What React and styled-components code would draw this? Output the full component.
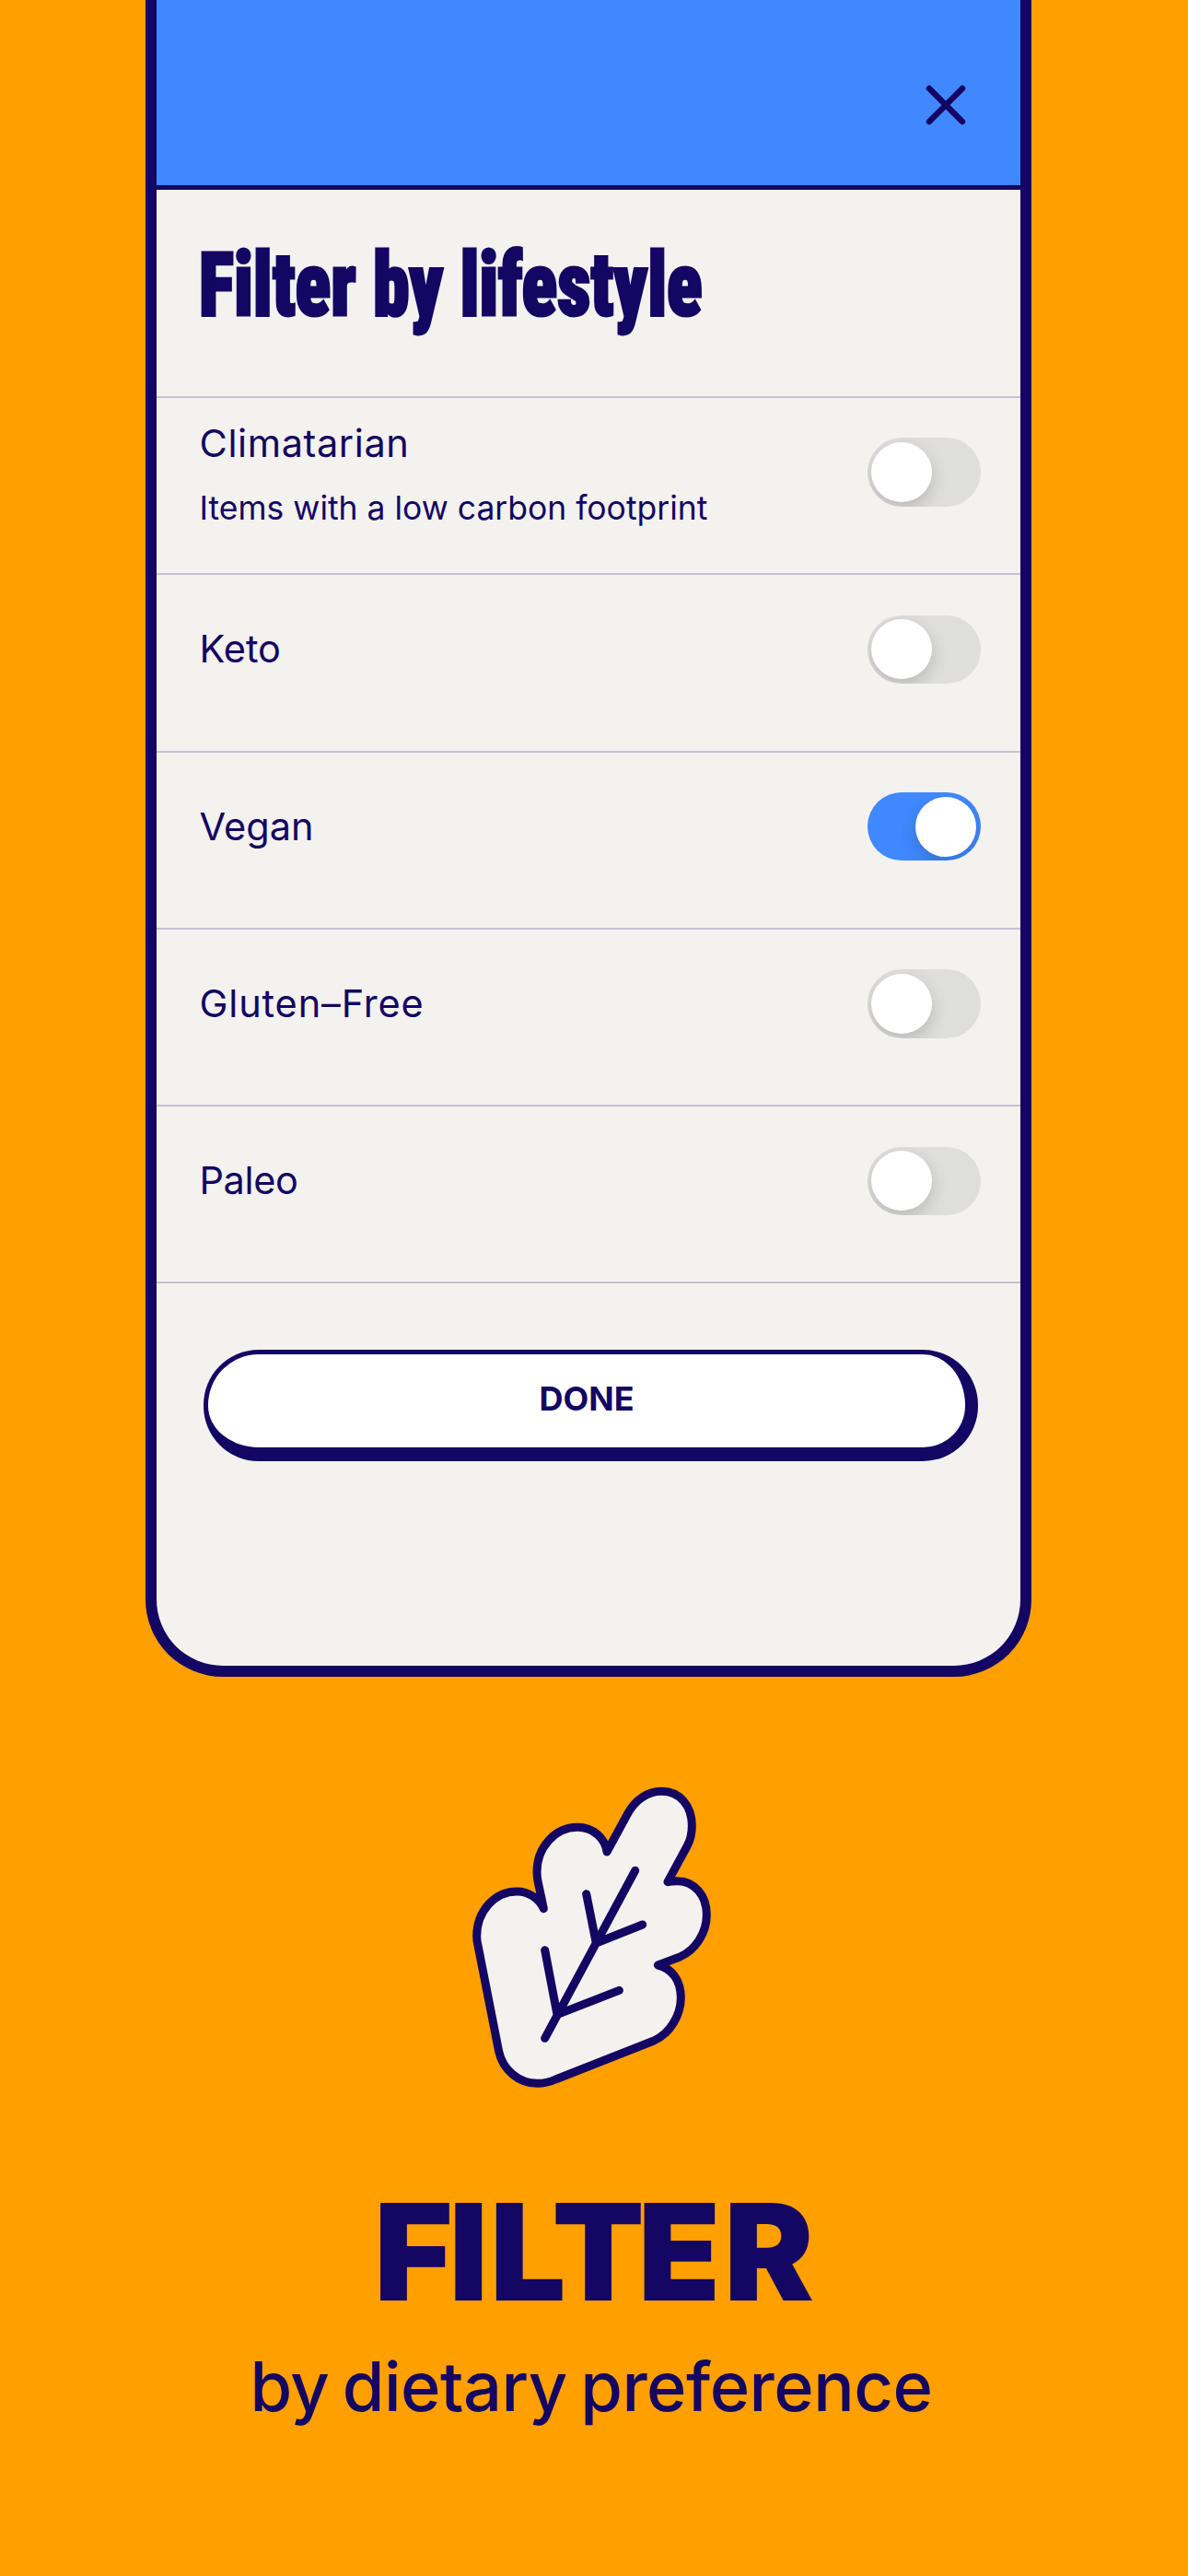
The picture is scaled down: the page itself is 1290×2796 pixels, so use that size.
import React from 'react';

import styled, { createGlobalStyle } from 'styled-components';

const NAVY = '#140663';
const BLUE = '#4088ff';
const CREAM = '#f3f2ee';

const GlobalStyle = createGlobalStyle`
    * {
        box-sizing: border-box;
    }
    body {
        margin: 0;
        background-color: #ffa000;
        color: ${NAVY};
        font-family: Inter, 'Liberation Sans', sans-serif;
    }
`;
const Page = styled.main`
    display: flex;
    flex-direction: column;
    align-items: center;
    width: 1290px;
    height: 2796px;
    overflow: hidden;
`;
const Phone = styled.section`
    display: flex;
    flex-direction: column;
    width: 962px;
    height: 1820px;
    margin-right: 12px;
    border: 12px solid ${NAVY};
    border-top: none;
    border-radius: 0 0 84px 84px;
    background-color: ${CREAM};
`;
const TopBar = styled.header`
    display: flex;
    justify-content: flex-end;
    align-items: flex-start;
    height: 206px;
    padding: 90px 57px 0 0;
    background-color: ${BLUE};
    border-bottom: 5px solid ${NAVY};
`;
const CloseButton = styled.button`
    width: 48px;
    height: 48px;
    padding: 0;
    border: none;
    background: none;
    svg {
        display: block;
    }
`;
const Heading = styled.h1`
    height: 224px;
    margin: 0;
    padding: 43px 0 0 46px;
    font-family: Roboto, 'Liberation Sans', sans-serif;
    font-size: 97px;
    font-weight: 900;
    font-stretch: 75%;
    line-height: 120px;
    white-space: nowrap;
    span {
        display: inline-block;
        transform: scaleX(0.823);
        transform-origin: left;
        -webkit-text-stroke: 3px ${NAVY};
    }
`;
const Row = styled.div`
    display: flex;
    justify-content: space-between;
    align-items: flex-start;
    height: 192.3px;
    padding: 0 42.9px 0 46.5px;
    border-top: 2px solid #c5c1d5;
`;
const Labels = styled.div`
    padding-top: ${props => props.$withNote ? 19 : 50}px;
`;
const Label = styled.div`
    font-size: 41.5px;
    line-height: 60px;
    letter-spacing: ${props => props.$tracking || 0}px;
`;
const Note = styled.div`
    margin-top: 16px;
    font-size: 35.5px;
    line-height: 50px;
`;
const Switch = styled.button`
    display: flex;
    justify-content: ${props => props.$on ? 'flex-end' : 'flex-start'};
    align-items: center;
    width: 123.5px;
    height: 74.5px;
    margin-top: 43.4px;
    padding: 0 4.7px;
    border: none;
    border-radius: 38px;
    overflow: hidden;
    background-color: ${props => props.$on ? BLUE : '#dededc'};
`;
const Knob = styled.span`
    width: 66px;
    height: 65px;
    border-radius: 50%;
    background-color: #ffffff;
    box-shadow: 0 7px 18px rgba(0, 0, 0, 0.17);
`;
const Actions = styled.div`
    padding: 72px 46px 0 51px;
    border-top: 2px solid #c5c1d5;
`;
const DoneButton = styled.button`
    width: 841px;
    height: 121px;
    padding: 0 0 6px;
    border: solid ${NAVY};
    border-width: 5px 14px 15px 5px;
    border-radius: 60px;
    background-color: #ffffff;
    color: ${NAVY};
    font-family: inherit;
    font-size: 36px;
    font-weight: 700;
`;
const Leaf = styled.svg`
    width: 310px;
    height: 370px;
    margin-top: 100px;
    fill: none;
    stroke: ${NAVY};
    stroke-width: 27;
    stroke-linecap: round;
    stroke-linejoin: round;
`;
const Title = styled.h2`
    display: flex;
    margin: 79px 0 0;
    font-size: 146px;
    font-weight: 900;
    line-height: 150px;
`;
const Letter = styled.span`
    margin-right: ${props => props.$kern}px;
`;
const Tagline = styled.p`
    margin: 26px 6px 0 0;
    font-size: 74px;
    font-weight: 500;
    line-height: 90px;
    letter-spacing: -0.5px;
    word-spacing: -5px;
    white-space: nowrap;
`;

const title = [['F', -4], ['I', 2], ['L', -15], ['T', -7], ['E', 4], ['R', 0]];

class App extends React.Component {
    state = {
        diets: [
            { name: 'Climatarian', note: 'Items with a low carbon footprint', tracking: 0.6, on: false },
            { name: 'Keto', on: false },
            { name: 'Vegan', on: true },
            { name: 'Gluten–Free', tracking: 0.85, on: false },
            { name: 'Paleo', tracking: -0.4, on: false },
        ]
    }

    toggle = (name) => {
        this.setState(({ diets }) => ({
            diets: diets.map(diet => diet.name === name ? { ...diet, on: !diet.on } : diet)
        }));
    }

    render() {
        return (
            <Page>
                <GlobalStyle />
                <Phone>
                    <TopBar>
                        <CloseButton aria-label="Close">
                            <svg width="48" height="48" viewBox="0 0 48 48" stroke={NAVY} strokeWidth="6.4" strokeLinecap="round">
                                <path d="M6 6L42 42M42 6L6 42" />
                            </svg>
                        </CloseButton>
                    </TopBar>
                    <Heading><span>Filter by lifestyle</span></Heading>
                    {this.state.diets.map(diet =>
                        <Row key={diet.name}>
                            <Labels $withNote={!!diet.note}>
                                <Label $tracking={diet.tracking}>{diet.name}</Label>
                                {diet.note && <Note>{diet.note}</Note>}
                            </Labels>
                            <Switch
                                role="switch"
                                aria-checked={diet.on}
                                aria-label={diet.name}
                                $on={diet.on}
                                onClick={() => this.toggle(diet.name)}
                            >
                                <Knob />
                            </Switch>
                        </Row>)}
                    <Actions>
                        <DoneButton>DONE</DoneButton>
                    </Actions>
                </Phone>
                <Leaf viewBox="0 0 930 1110">
                    <path
                        fill={CREAM}
                        d="M155 920L87 575C83 560 83 552 83 545C83 465 140 399 214 399C250 399 285 420 301 455L282 365C280 355 279 345 279 335C279 257 337 190 411 190C462 190 501 225 507 270L575 145C600 100 640 73 685 73C745 73 784 120 784 185C784 210 779 232 768 252L705 368C716 365 727 365 737 365C792 365 832 412 832 475C832 535 795 590 745 612L673 639C720 650 748 690 748 745C748 800 715 860 660 885L340 1011C320 1020 300 1024 280 1024C220 1024 168 980 155 920Z"
                    />
                    <path d="M599 331L305 877M440 407L472 567L623 507M305 590L345 800L547 721" />
                </Leaf>
                <Title>
                    {title.map(([letter, kern]) =>
                        <Letter key={letter} $kern={kern}>{letter}</Letter>
                    )}
                </Title>
                <Tagline>by dietary preference</Tagline>
            </Page>
        );
    }
}

export default App;
